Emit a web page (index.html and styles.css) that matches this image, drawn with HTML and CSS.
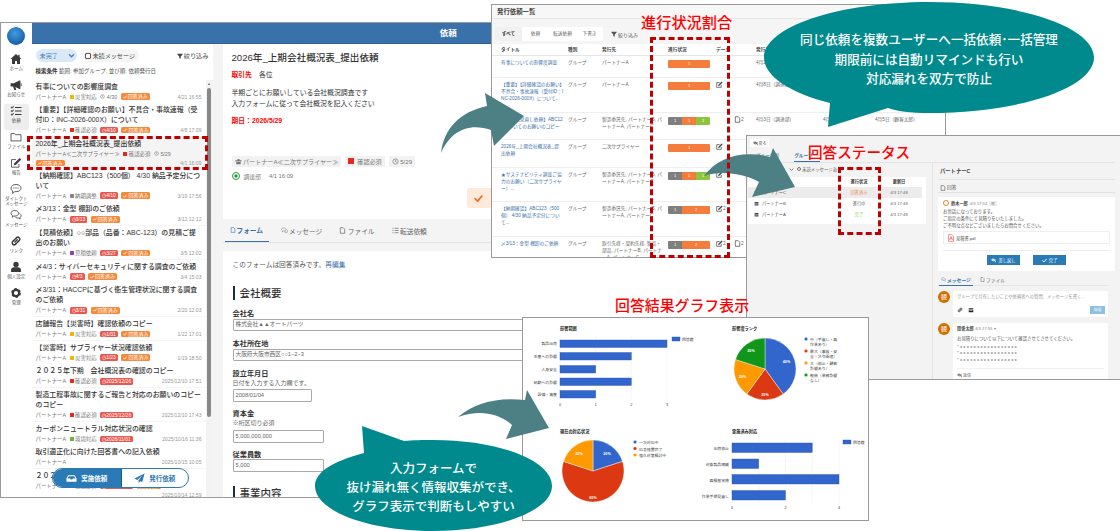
FILE: index.html
```html
<!DOCTYPE html>
<html lang="ja">
<head>
<meta charset="utf-8">
<title>依頼</title>
<link rel="stylesheet" href="styles.css">
</head>
<body>
<svg class="sprite" aria-hidden="true">
  <symbol id="i-home" viewBox="0 0 12 12"><path d="M6 1 .5 6H2v5h3V8h2v3h3V6h1.500L9.600 4.200V1.800H8.200v1.100z"/></symbol>
  <symbol id="i-mega" viewBox="0 0 12 12"><path d="M.6 4.200h3.200L9.400 1.400h1v8.600h-1L5.400 8l.9 3H4.200L3.200 7.600H.6z"/><path d="M10.800 4.200h.8v2.800h-.8z"/></symbol>
  <symbol id="i-list" viewBox="0 0 12 12"><path d="M5 2h6.500v1.100H5zM5 5.500h6.500v1.100H5zM5 9h6.500v1.100H5zM.6 2.200l.7-.6.7.8L3.400.9l.7.6-2.100 2.300zM.6 5.700l.7-.6.7.8 1.400-1.500.7.6-2.100 2.300zM.6 9.200l.7-.6.7.8 1.400-1.500.7.6-2.100 2.300z"/></symbol>
  <symbol id="i-folder" viewBox="0 0 12 12"><path class="ln" d="M1 2.500h3.400l1 1.200H11v6.200H1z"/></symbol>
  <symbol id="i-edit" viewBox="0 0 12 12"><path class="ln" d="M9 7v3.200H1.500V2.600h4.600"/><path d="M4.400 6.200 9.600 1l1.600 1.600L6 7.800l-2.200.6z"/></symbol>
  <symbol id="i-chat" viewBox="0 0 12 12"><path class="ln" d="M6 1.500c3 0 5 1.500 5 3.600s-2 3.600-5 3.600l-1.200-.1L2.600 10.400l.2-2.300C1.700 7.500 1 6.400 1 5.100 1 3 3 1.500 6 1.500z"/><path d="M3.400 4.500h1v1h-1zM5.500 4.500h1v1h-1zM7.600 4.500h1v1h-1z"/></symbol>
  <symbol id="i-chats" viewBox="0 0 12 12"><path class="ln" d="M4.800 1.500c2.200 0 3.900 1.200 3.900 2.800S7 7.100 4.800 7.100l-1-.1-1.500 1.200.1-1.800C1.500 5.900 1 5.100 1 4.300 1 2.700 2.600 1.500 4.800 1.500z"/><path class="ln" d="M9.500 4.400c1 .5 1.600 1.300 1.600 2.200 0 .8-.4 1.400-1.100 1.900l.1 1.500-1.400-1c-1.500.2-3-.3-3.700-1.300"/></symbol>
  <symbol id="i-link" viewBox="0 0 12 12"><path class="lnb" d="M5 7 7.200 4.800M4.700 4.500 2.600 6.600a2 2 0 0 0 2.800 2.800l1.100-1.100M7.300 7.500l2.100-2.100a2 2 0 0 0-2.800-2.800L5.500 3.700"/></symbol>
  <symbol id="i-user" viewBox="0 0 12 12"><circle cx="6" cy="3.500" r="2.700"/><path d="M1 11V9c0-1.700 1.500-2.800 3-2.800h4c1.500 0 3 1.100 3 2.800v2z"/></symbol>
  <symbol id="i-gear" viewBox="0 0 12 12"><circle class="gear" cx="6" cy="6" r="3.200"/><circle class="gear-d" cx="6" cy="6" r="3.900"/></symbol>
  <symbol id="i-funnel" viewBox="0 0 8 8"><path d="M.5 1h7v1L5 4.600V7.500L3 6.500V4.600L.5 2z"/></symbol>
  <symbol id="i-check" viewBox="0 0 8 8"><path class="lnb" d="M1 4.200 3.200 6.400 7 1.800"/></symbol>
  <symbol id="i-clock" viewBox="0 0 8 8"><circle class="ln" cx="4" cy="4" r="3"/><path class="ln" d="M4 2v2.200l1.400.8"/></symbol>
  <symbol id="i-doc" viewBox="0 0 8 8"><path class="ln" d="M1.500.8h3.300l1.700 1.700v4.700h-5z"/></symbol>
  <symbol id="i-pen" viewBox="0 0 8 8"><path class="ln" d="M6 4.500v2.700H.8V1.800h3.400"/><path d="M2.800 4.300 6.400.7l1.100 1.100L3.900 5.400l-1.400.3z"/></symbol>
  <symbol id="i-lines" viewBox="0 0 8 8"><path class="ln" d="M3 1.500h4.500M3 4h4.500M3 6.500h4.500M.5 1.500h1.200M.5 4h1.200M.5 6.500h1.200"/></symbol>
  <symbol id="i-inbox" viewBox="0 0 12 12"><path d="M2.500 2.500h7L11.500 6v3.500h-11V6zM3 3.500 1.800 6h2.700l.7 1h1.600l.7-1h2.700L9 3.500z"/></symbol>
  <symbol id="i-plane" viewBox="0 0 12 12"><path d="M11.500.5 .5 6l3 1.500L9 3 5 8v3l1.900-2.100 2.100 1z"/></symbol>
  <symbol id="i-group" viewBox="0 0 8 8"><circle cx="4" cy="2.600" r="1.500"/><path d="M1.400 7V5.700C1.400 4.800 2.200 4.400 3 4.400h2c.8 0 1.600.4 1.600 1.300V7z"/><circle cx="1.300" cy="3.300" r=".9"/><circle cx="6.700" cy="3.300" r=".9"/></symbol>
  <symbol id="i-store" viewBox="0 0 8 8"><path d="M1 1.500h6V3H1zM1 3.500h6V7H1z"/><path class="wh" d="M2 4.500h4v.8H2z"/></symbol>
  <symbol id="i-back" viewBox="0 0 8 8"><path class="lnb" d="M7 3 3 3M3 1 1 3 3 5M3 3c3 0 4 1.500 4 3"/></symbol>
</svg>

<main class="canvas">

  <section class="win win-main">
    <nav class="rail">
      <div class="logo"></div>
      <a class="rail-item"><svg class="rail-ic"><use href="#i-home"/></svg><span>ホーム</span></a>
      <a class="rail-item"><svg class="rail-ic"><use href="#i-mega"/></svg><span>お知らせ</span></a>
      <a class="rail-item is-on"><svg class="rail-ic"><use href="#i-list"/></svg><span>依頼</span></a>
      <a class="rail-item"><svg class="rail-ic"><use href="#i-folder"/></svg><span>ファイル</span></a>
      <a class="rail-item"><svg class="rail-ic"><use href="#i-edit"/></svg><span>報告</span></a>
      <a class="rail-item rail-two"><svg class="rail-ic"><use href="#i-chat"/></svg><span>ダイレクト<br>メッセージ</span></a>
      <a class="rail-item"><svg class="rail-ic"><use href="#i-chats"/></svg><span>メッセージ</span></a>
      <a class="rail-item"><svg class="rail-ic"><use href="#i-link"/></svg><span>リンク</span></a>
      <a class="rail-item"><svg class="rail-ic"><use href="#i-user"/></svg><span>個人設定</span></a>
      <a class="rail-item"><svg class="rail-ic"><use href="#i-gear"/></svg><span>管理</span></a>
    </nav>
    <div class="main-col">
      <header class="hdr">依頼</header>
      <div class="panes">
        <div class="list-pane">
          <div class="filter-row">
            <span class="pill-sel">未完了<svg class="chev" viewBox="0 0 8 8"><path class="lnb" d="M1.500 3 4 5.500 6.500 3"/></svg></span>
            <span class="pill-chk"><i class="cbx"></i>未読メッセージ</span>
            <span class="narrow"><svg class="ic6"><use href="#i-funnel"/></svg>絞り込み</span>
          </div>
          <p class="cond"><b>検索条件</b> 範囲: 参加グループ, 並び順: 依頼発行日</p>
          <div class="list-wrap">
            <ul class="items">
              <li class="item"><h3>有事についての影響度調査</h3><div class="meta"><span>パートナーA</span><span class="tag"><i class="mk m-y"></i>災害対応</span><span class="tag"><svg class="ic5"><use href="#i-clock"/></svg>4/30</span><span class="bd bd-a"><svg class="ic4"><use href="#i-check"/></svg>回答済み</span><time>4/21 16:55</time></div></li>
              <li class="item"><h3>【重要】【詳細確認のお願い】不具合・事故速報（受<br>付ID：INC-2026-000X）について</h3><div class="meta"><span>パートナーA</span><span class="tag"><i class="mk m-r"></i>確認必須</span><span class="bd bd-d">◷4/10</span><span class="bd bd-a"><svg class="ic4"><use href="#i-check"/></svg>回答済み</span><time>4/8 17:09</time></div></li>
              <li class="item is-sel"><h3>2026年_上期会社概況表_提出依頼</h3><div class="meta"><span>パートナーA≪二次サプライヤー≫</span><span class="tag"><i class="mk m-r"></i>確認必須</span><span class="tag"><svg class="ic5"><use href="#i-clock"/></svg>5/29</span></div><div class="meta meta-2"><span class="bd bd-a"><svg class="ic4"><use href="#i-check"/></svg>回答済み</span><time>4/1 16:09</time></div></li>
              <li class="item"><h3>【納期確認】ABC123（500個） 4/30 納品予定分につ<br>いて</h3><div class="meta"><span>パートナーA</span><span class="tag"><i class="mk m-n"></i>納期調整</span><span class="bd bd-d">◷4/10</span><span class="bd bd-a"><svg class="ic4"><use href="#i-check"/></svg>回答済み</span><time>3/19 17:56</time></div></li>
              <li class="item"><h3>〆3/13：金型 棚卸のご依頼</h3><div class="meta"><span>パートナーA</span><span class="bd bd-d">◷3/13</span><span class="bd bd-a"><svg class="ic4"><use href="#i-check"/></svg>回答済み</span><time>3/12 12:12</time></div></li>
              <li class="item"><h3>【見積依頼】○○部品（品番：ABC-123）の見積ご提<br>出のお願い</h3><div class="meta"><span>パートナーA</span><span class="tag"><i class="mk m-p"></i>見積依頼</span><span class="bd bd-d">◷3/27</span><span class="bd bd-a"><svg class="ic4"><use href="#i-check"/></svg>回答済み</span><time>3/5 12:02</time></div></li>
              <li class="item"><h3>〆4/3：サイバーセキュリティに関する調査のご依頼</h3><div class="meta"><span>パートナーA</span><span class="bd bd-d">◷4/3</span><span class="bd bd-a"><svg class="ic4"><use href="#i-check"/></svg>回答済み</span><time>3/4 15:03</time></div></li>
              <li class="item"><h3>〆3/31：HACCPに基づく衛生管理状況に関する調査<br>のご依頼</h3><div class="meta"><span>パートナーA</span><span class="bd bd-d">◷3/31</span><span class="bd bd-a"><svg class="ic4"><use href="#i-check"/></svg>回答済み</span><time>2/20 12:03</time></div></li>
              <li class="item"><h3>店舗報告【災害時】確認依頼のコピー</h3><div class="meta"><span>パートナーA</span><span class="tag"><i class="mk m-y"></i>災害対応</span><span class="bd bd-d">◷1/31</span><span class="bd bd-a"><svg class="ic4"><use href="#i-check"/></svg>回答済み</span><time>1/22 17:01</time></div></li>
              <li class="item"><h3>【災害時】サプライヤー状況確認依頼</h3><div class="meta"><span>パートナーA</span><span class="tag"><i class="mk m-y"></i>災害対応</span><span class="bd bd-d">◷1/23</span><span class="bd bd-a"><svg class="ic4"><use href="#i-check"/></svg>回答済み</span><time>1/19 18:50</time></div></li>
              <li class="item"><h3>２０２５年下期　会社概況表の確認のコピー</h3><div class="meta"><span>パートナーA</span><span class="tag"><i class="mk m-r"></i>確認必須</span><span class="bd bd-d">◷2025/12/26</span><time>2025/12/10 17:51</time></div></li>
              <li class="item"><h3>製造工程事故に関するご報告と対応のお願いのコピー<br>のコピー</h3><div class="meta"><span>パートナーA</span><span class="tag"><i class="mk m-r"></i>確認必須</span><span class="bd bd-d">◷2025/12/26</span><time>2025/12/10 17:43</time></div></li>
              <li class="item"><h3>カーボンニュートラル対応状況の確認</h3><div class="meta"><span>パートナーA</span><span class="tag"><i class="mk m-g"></i>環境対応</span><span class="bd bd-d">◷2026/11/01</span><time>2025/10/16 11:36</time></div></li>
              <li class="item"><h3>取引適正化に向けた回答書への記入依頼</h3><div class="meta"><span>パートナーA</span><time>2025/10/15 10:05</time></div></li>
              <li class="item"><h3>２０２５年上期　会社概況表の確認</h3><div class="meta"><span>パートナーA</span><span class="tag"><i class="mk m-r"></i>確認必須</span><span class="bd bd-d">◷2025/10/31</span><span class="bd bd-a">回答済み</span></div><div class="meta meta-2"><time>2025/10/14 12:59</time></div></li>
            </ul>
            <div class="scrollbar"><i class="sb-up"></i><i class="sb-thumb"></i></div>
          </div>
        </div>
        <div class="detail">
          <article class="card-top">
            <h1>2026年_上期会社概況表_提出依頼</h1>
            <p class="to"><b>取引先</b><span>各位</span></p>
            <p class="body-text">半期ごとにお願いしている会社概況調査です<br>入力フォームに従って会社概況を記入ください</p>
            <p class="due">期日：2026/5/29</p>
            <div class="chips">
              <span class="chip"><svg class="ic7c"><use href="#i-group"/></svg>パートナーA≪二次サプライヤー≫</span>
              <span class="chip"><i class="mk-l m-r"></i>確認必須</span>
              <span class="chip"><svg class="ic7c"><use href="#i-clock"/></svg>5/29</span>
            </div>
            <div class="author"><i class="ring"></i><span>調達部</span><time>4/1 16:09</time></div>
            <div class="done-box"><svg class="ic9"><use href="#i-check"/></svg></div>
          </article>
          <div class="tabs">
            <span class="tab is-on"><svg class="ic6"><use href="#i-doc"/></svg>フォーム</span>
            <span class="tab"><svg class="ic7c"><use href="#i-chats"/></svg>メッセージ</span>
            <span class="tab"><svg class="ic7c"><use href="#i-doc"/></svg>ファイル</span>
            <span class="tab"><svg class="ic7c"><use href="#i-lines"/></svg>転送依頼</span>
          </div>
          <form class="card-form">
            <p class="form-note">このフォームは回答済みです。<a>再編集</a></p>
            <h2 class="sec">会社概要</h2>
            <label class="fl fl-first">会社名</label>
            <div class="inp inp-full">株式会社▲▲オートパーツ</div>
            <label class="fl">本社所在地</label>
            <div class="inp inp-full">大阪府大阪市西区○○1−2−3</div>
            <label class="fl">設立年月日</label>
            <p class="hint">日付を入力する入力欄です。</p>
            <div class="inp inp-date">2008/01/04</div>
            <label class="fl fl-a">資本金</label>
            <p class="hint">※桁区切り必須</p>
            <div class="inp inp-num inp-gap">5,000,000,000</div>
            <label class="fl fl-b">従業員数</label>
            <div class="inp inp-num inp-flush">5,000</div>
            <h2 class="sec sec-2">事業内容</h2>
          </form>
        </div>
      </div>
    </div>
  </section>
  <div class="switch"><span class="sw sw-on"><svg class="ic9w"><use href="#i-inbox"/></svg>実施依頼</span><span class="sw"><svg class="ic9w"><use href="#i-plane"/></svg>発行依頼</span></div>

  <section class="win win-issued">
    <header class="iss-head">発行依頼一覧</header>
    <div class="iss-bar">
      <div class="seg"><span class="seg-on">すべて</span><span>依頼</span><span>転送依頼</span><span>下書き</span></div>
      <span class="iss-filter"><svg class="ic6"><use href="#i-funnel"/></svg>絞り込み</span>
    </div>
    <table class="iss">
      <colgroup><col class="c1"><col class="c2"><col class="c3"><col class="c4"><col class="c5"><col class="c6"><col class="c7"><col class="c8"><col class="c9"></colgroup>
      <thead><tr><th>タイトル</th><th>種別</th><th>発行先</th><th>進行状況</th><th>データ</th><th></th><th>発行日</th><th></th><th></th></tr></thead>
      <tbody>
        <tr><td class="lk">有事についての影響度調査</td><td>グループ</td><td>パートナーA</td><td class="pc"><div class="prog"><i class="p-o p-1">1</i></div></td><td></td><td></td><td>4月21日</td><td></td><td></td></tr>
        <tr><td class="lk">【重要】【詳細確認のお願い】<br>不具合・事故速報（受付ID：I<br>NC-2026-000X）について...</td><td>グループ</td><td>パートナーA</td><td class="pc"><div class="prog"><i class="p-o p-1">1</i></div></td><td><svg class="ic7"><use href="#i-pen"/></svg></td><td></td><td>4月8日（調達部）</td><td></td><td></td></tr>
        <tr><td class="lk">【取引先見直し依頼】ABC12<br>3についてのお願いのコピー</td><td>グループ</td><td>製造委託先, パートナーB, パ<br>ートナーA, パートナーC</td><td class="pc"><div class="prog"><i class="p-g p-1">1</i><i class="p-o p-1">1</i><i class="p-n p-1">1</i></div></td><td></td><td><svg class="ic7"><use href="#i-doc"/></svg>2</td><td>4月3日（調達部）</td><td>4月5日</td><td>4月5日（顧客太郎）</td></tr>
        <tr><td class="lk">2026年_上期会社概況表_提<br>出依頼</td><td>グループ</td><td>二次サプライヤー</td><td class="pc"><div class="prog"><i class="p-o p-1">1</i></div></td><td><svg class="ic7"><use href="#i-pen"/></svg></td><td></td><td></td><td></td><td></td></tr>
        <tr><td class="lk">★サステナビリティ調査ご協<br>力のお願い（二次サプライヤ<br>ー）...</td><td>グループ</td><td>製造委託先, パートナーB, パ<br>ートナーA, パートナーC</td><td class="pc"><div class="prog"><i class="p-g p-1">1</i><i class="p-o p-1">1</i><i class="p-n p-1">1</i></div></td><td><svg class="ic7"><use href="#i-pen"/></svg></td><td></td><td></td><td></td><td></td></tr>
        <tr><td class="lk">【納期確認】ABC123（500<br>個） 4/30 納品予定分につい<br>て...</td><td>グループ</td><td>製造委託先, パートナーB, パ<br>ートナーA, パートナーC</td><td class="pc"><div class="prog"><i class="p-g p-1">1</i><i class="p-o p-2">2</i></div></td><td><svg class="ic7"><use href="#i-pen"/></svg>2</td><td></td><td></td><td></td><td></td></tr>
        <tr><td class="lk">〆3/13：金型 棚卸のご依頼</td><td>グループ</td><td>取引先様・契約先様, 製品・<br>部品, パートナーB, パートナ<br>ーA, パートナーC</td><td class="pc"><div class="prog"><i class="p-g p-1">1</i><i class="p-o p-2">2</i></div></td><td><svg class="ic7"><use href="#i-pen"/></svg>2</td><td><svg class="ic7"><use href="#i-doc"/></svg>2</td><td></td><td></td><td></td></tr>
      </tbody>
    </table>
  </section>

  <section class="win win-status">
    <div class="back"><svg class="ic5"><use href="#i-back"/></svg>戻る</div>
    <div class="st-tabs"><span>グループ別</span><span class="is-on">グループ</span></div>
    <div class="st-body">
      <div class="st-left">
        <div class="st-filter"><svg class="chev2" viewBox="0 0 8 8"><path class="lnb" d="M1.500 3 4 5.500 6.500 3"/></svg><i class="radio"></i>未読メッセージあり</div>
        <div class="st-table">
          <div class="st-row st-hd"><span></span><b>進行状況</b><b>更新日</b></div>
          <div class="st-row is-sel"><span class="st-name"><svg class="ic6"><use href="#i-store"/></svg>パートナーC</span><span class="s-o">回答済み</span><span>4/3 17:48</span></div>
          <div class="st-row"><span class="st-name"><svg class="ic6"><use href="#i-store"/></svg>パートナーB</span><span>進行中</span><span>4/3 17:48</span></div>
          <div class="st-row"><span class="st-name"><svg class="ic6"><use href="#i-store"/></svg>パートナーA</span><span class="s-g">完了</span><span>4/3 17:48</span></div>
        </div>
      </div>
      <div class="st-right">
        <h4 class="st-title">パートナーC</h4>
        <p class="st-ans"><svg class="ic6"><use href="#i-doc"/></svg>回答</p>
        <div class="ans-card">
          <p class="ans-by"><i class="ring-o"></i><b>鈴木一郎</b><span>4/3 17:54</span><em>既</em></p>
          <p class="ans-text">お世話になっております。<br>ご指定の条件にて見積りをいたしました。<br>ご不明な点などございましたらお問合せください。</p>
          <div class="ans-file"><svg class="pdf" viewBox="0 0 8 10"><path d="M.7.5h4.500L7.300 2.600V9.500H.7z"/><path d="M2 7.500 4 3l2 4.500M2.500 6h3"/></svg>見積書.pdf</div>
          <div class="ans-btns"><span class="btn"><svg class="ic5"><use href="#i-back"/></svg>差し戻し</span><span class="btn"><svg class="ic5"><use href="#i-check"/></svg>完了</span></div>
        </div>
        <div class="msg-tabs"><span class="is-on"><svg class="ic5"><use href="#i-chats"/></svg>メッセージ</span><span><svg class="ic5"><use href="#i-doc"/></svg>ファイル</span></div>
        <div class="msg"><i class="ava">観</i>
          <div class="msg-card msg-input">
            <p class="ph">グループで共有したいことや依頼者への質問、メッセージを書く...</p>
            <div class="msg-tools"><svg class="ic7"><use href="#i-link"/></svg><svg class="ic7"><use href="#i-store"/></svg><span class="send">送信</span></div>
          </div>
        </div>
        <div class="msg msg-2"><i class="ava">観</i>
          <div class="msg-card msg-read">
            <p class="m-by"><b>関係太郎</b> 4/3 17:55 ▾</p>
            <p class="m-text">お見積りについて以下について確認させてさせてください。</p>
            <p class="m-list">* x x x x x x x x x x x x x x x x x<br>* x x x x x x x x x x x x x x x x x<br>* x x x x x x x x x x x x x x x x x</p>
            <p class="m-reply"><svg class="ic5"><use href="#i-back"/></svg>返信</p>
          </div>
        </div>
      </div>
    </div>
  </section>

  <section class="win win-chart">
    <svg class="chart-svg" viewBox="522 317 346 203">
      <g class="grid">
        <path d="M559 335V400M594.700 335V400M630.300 335V400M666 335V400"/>
        <path d="M731 438V502M757.800 438V502M784.500 438V502M811.300 438V502M838 438V502"/>
      </g>
      <text class="ct" x="559" y="329">影響範囲</text>
      <g class="bars">
        <rect x="559" y="339" width="107" height="7.500"/>
        <rect x="559" y="351.500" width="71.300" height="7.500"/>
        <rect x="559" y="364.500" width="35.700" height="7.500"/>
        <rect x="559" y="377" width="71.300" height="7.500"/>
        <rect x="559" y="389.500" width="35.700" height="7.500"/>
        <rect x="671" y="336" width="8" height="4"/>
      </g>
      <g class="lb-r">
        <text x="556" y="344">製品出荷</text>
        <text x="556" y="357">生産への影響</text>
        <text x="556" y="370">人身安全</text>
        <text x="556" y="382.500">納期への影響</text>
        <text x="556" y="395">設備・資産</text>
      </g>
      <g class="lb-c">
        <text x="559" y="405">0</text><text x="594.700" y="405">1</text><text x="630.300" y="405">2</text><text x="666" y="405">3</text>
      </g>
      <text class="lb" x="681" y="340">回答数</text>

      <text class="ct" x="731" y="329">影響度ランク</text>
      <path class="s-bl" d="M764 368V337A31 31 0 0 1 782.200 393.100Z"/>
      <path class="s-rd" d="M764 368 782.200 393.100A31 31 0 0 1 745.800 393.100Z"/>
      <path class="s-or" d="M764 368 745.800 393.100A31 31 0 0 1 734.500 358.400Z"/>
      <path class="s-gr" d="M764 368 734.500 358.400A31 31 0 0 1 764 337Z"/>
      <g class="pie-t">
        <text x="785.500" y="362">40%</text><text x="764" y="395">20%</text><text x="741.500" y="377">20%</text><text x="750" y="351">20%</text>
      </g>
      <circle class="s-bl" cx="805" cy="338" r="1.800"/><circle class="s-rd" cx="805" cy="350" r="1.800"/><circle class="s-or" cx="805" cy="362" r="1.800"/><circle class="s-gr" cx="805" cy="374" r="1.800"/>
      <g class="lb">
        <text x="809" y="340">中（手直し・再</text><text x="809" y="345">作業あり）</text>
        <text x="809" y="352">最大（事故・安</text><text x="809" y="357">全・法令関連）</text>
        <text x="809" y="364">大（停止・顧客</text><text x="809" y="369">影響あり）</text>
        <text x="809" y="376">軽微（業務影響</text><text x="809" y="381">なし）</text>
      </g>

      <text class="ct" x="559" y="432">現在の対応状況</text>
      <path class="s-bl" d="M592 470V439A31 31 0 0 1 621.500 460.400Z"/>
      <path class="s-rd" d="M592 470 621.500 460.400A31 31 0 1 1 562.500 460.400Z"/>
      <path class="s-or" d="M592 470 562.500 460.400A31 31 0 0 1 592 439Z"/>
      <g class="pie-t">
        <text x="606" y="454">20%</text><text x="592" y="498">60%</text><text x="578" y="454">20%</text>
      </g>
      <circle class="s-bl" cx="634" cy="441" r="1.800"/><circle class="s-rd" cx="634" cy="447.500" r="1.800"/><circle class="s-or" cx="634" cy="454" r="1.800"/>
      <g class="lb">
        <text x="638" y="443">一次対応中</text><text x="638" y="449.500">応急措置完了</text><text x="638" y="456">恒久対策検討中</text>
      </g>

      <text class="ct" x="731" y="432">実施済み対応</text>
      <g class="bars">
        <rect x="731" y="442" width="80.200" height="9.500"/>
        <rect x="731" y="458" width="26.700" height="9.500"/>
        <rect x="731" y="473.500" width="107" height="9.500"/>
        <rect x="731" y="489.500" width="53.500" height="9.500"/>
        <rect x="842" y="439" width="8" height="4"/>
      </g>
      <g class="lb-r">
        <text x="728" y="449">出荷停止</text>
        <text x="728" y="465">対象製品隔離</text>
        <text x="728" y="480.500">再検査実施</text>
        <text x="728" y="496.500">作業手順見直し</text>
      </g>
      <g class="lb-c">
        <text x="731" y="508">0</text><text x="784.500" y="508">2</text><text x="838" y="508">4</text>
      </g>
      <text class="lb" x="852" y="443">回答数</text>
    </svg>
  </section>

  <svg class="overlay" viewBox="0 0 1120 531" aria-hidden="true">
    <path class="arrow" d="M441 153C444 128 460 112 487 106L485 93 524 116 494 146 491 130C468 122 450 132 441 153Z"/>
    <path class="arrow" d="M704 176C718 156 745 150 770 157L773 148 795 187 752 197 759 182C745 174 722 170 704 176Z"/>
    <path class="arrow" d="M458 417C475 402 500 397 525 400L527 390 549 428 506 439 512 425C497 412 478 410 458 417Z"/>
    <path class="bubble" d="M830 103 828 127 888 108C895 111 912 113 929 113 1020 113 1094 88 1094 57.500 1094 27 1020 2 929 2 838 2 764 27 764 57.500 764 76 790 93 830 103Z"/>
    <path class="bubble" d="M362 426 404 441C412 440 424 440 433 440 498 440 552 460 552 486 552 511 498 531 433 531 368 531 315 511 315 486 315 473 330 462 364 453Z"/>
  </svg>

  <div class="mark mark-sel"></div>
  <div class="mark mark-prog"></div>
  <div class="mark mark-status"></div>

  <p class="red red-1">進行状況割合</p>
  <p class="red red-2">回答ステータス</p>
  <p class="red red-3">回答結果グラフ表示</p>

  <p class="talk talk-1">同じ依頼を複数ユーザーへ一括依頼･一括管理<br>期限前には自動リマインドも行い<br>対応漏れを双方で防止</p>
  <p class="talk talk-2">入力フォームで<br>抜け漏れ無く情報収集ができ、<br>グラフ表示で判断もしやすい</p>
</main>
</body>
</html>
```

FILE: styles.css
```css
* { box-sizing: border-box; }
html, body { margin: 0; padding: 0; }
body { background: #fff; font-family: "Liberation Sans", "Noto Sans CJK JP", sans-serif; color: #333; }
h1, h2, h3, h4, p, ul { margin: 0; padding: 0; font-weight: normal; }
ul { list-style: none; }
i, em { font-style: normal; }
svg { display: block; fill: currentColor; flex: none; }
.sprite { position: absolute; width: 0; height: 0; }
.ln { fill: none; stroke: currentColor; stroke-width: .8; }
.lnb { fill: none; stroke: currentColor; stroke-width: 1.5; stroke-linecap: round; stroke-linejoin: round; }
.wh { fill: #fff; }
.gear { fill: none; stroke: currentColor; stroke-width: 2.2; }
.gear-d { fill: none; stroke: currentColor; stroke-width: 2; stroke-dasharray: 2.2 1.9; }

.canvas { position: relative; width: 1120px; height: 531px; overflow: hidden; background: #fff; }
.win { position: absolute; background: #fff; border: 1px solid #9a9a9a; overflow: hidden; }

/* main window */
.win-main { left: 0; top: 22px; width: 866px; height: 476px; display: flex; border-width: 1.5px; }
.rail { width: 30.5px; flex: none; display: flex; flex-direction: column; align-items: center; background: #fff; }
.logo { width: 18px; height: 18px; margin: 3.5px 0 7px; border-radius: 50%; background: radial-gradient(circle at 45% 35%, #3f9be0, #1a5fa5 75%, #134a85); flex: none; }
.rail-item { width: 25px; height: 26px; padding-top: 1px; display: flex; flex-direction: column; align-items: center; color: #555; font-size: 4.5px; line-height: 6px; text-align: center; border-radius: 2px; flex: none; white-space: nowrap; }
.rail-ic { width: 12px; height: 12px; margin-bottom: 1px; color: #3a3a3a; }
.rail-item.is-on { background: #eee; }
.rail-two { line-height: 5px; }
.main-col { flex: 1; min-width: 0; display: flex; flex-direction: column; }
.hdr { height: 21px; flex: none; background: #3b71ab; border-bottom: 1px solid #2d5f96; color: #fff; font-size: 8.5px; font-weight: bold; line-height: 20px; text-align: center; }
.panes { flex: 1; min-height: 0; display: flex; }

.list-pane { width: 181px; flex: none; display: flex; flex-direction: column; background: #fff; overflow: hidden; }
.filter-row { display: flex; align-items: center; height: 13px; margin-top: 5px; padding: 0 4px; flex: none; }
.pill-sel { width: 41px; height: 13px; border-radius: 7px; background: #d9e9f7; color: #3f7cb8; font-size: 6.200px; line-height: 13px; padding: 0 2px 0 4px; display: flex; align-items: center; justify-content: space-between; }
.chev { width: 7px; height: 7px; }
.pill-chk { margin-left: 5px; width: 57px; height: 13px; border-radius: 7px; background: #f5f5f5; font-size: 6.100px; display: flex; align-items: center; padding-left: 3px; color: #444; white-space: nowrap; }
.cbx { width: 6px; height: 6px; border: .7px solid #555; border-radius: 1px; margin-right: 2px; background: #fff; }
.narrow { margin-left: auto; display: flex; align-items: center; font-size: 6.200px; color: #444; white-space: nowrap; }
.cond { margin: 6px 0 0 4px; font-size: 5.500px; line-height: 6px; color: #555; white-space: nowrap; }
.cond b { color: #333; }
.list-wrap { display: flex; margin-top: 5.500px; flex: 1; min-height: 0; background: #f6f6f6; }
.items { width: 174px; flex: none; }
.scrollbar { flex: 1; position: relative; background: #f3f3f3; display: flex; flex-direction: column; align-items: center; }
.sb-up { width: 0; height: 0; border: 1.500px solid transparent; border-bottom: 2px solid #555; border-top: 0; margin-top: 3px; }
.sb-thumb { width: 4px; height: 329px; margin-top: 3px; background: #888; border-radius: 2px; }
.item { background: #fff; padding: 2px 4px 1px; margin-bottom: .7px; }
.item h3 { font-size: 6.900px; line-height: 10px; font-weight: 500; color: #333; white-space: nowrap; }
.item.is-sel { background: #f4f4f4; }
.meta { display: flex; align-items: center; gap: 3.500px; height: 10px; font-size: 5.400px; color: #777; white-space: nowrap; }
.meta time { margin-left: auto; font-size: 5.100px; color: #999; }
.meta-2 { height: 8px; }
.tag { display: inline-flex; align-items: center; gap: 1.500px; }
.mk { width: 4px; height: 4px; display: block; }
.mk-l { width: 6px; height: 6px; display: block; margin-right: 3px; }
.m-y { background: #f2b705; }
.m-r { background: #e6281e; }
.m-p { background: #8e44ad; }
.m-g { background: #6fb03e; }
.m-n { background: #888; }
.ic4 { width: 4px; height: 4px; margin-right: 1px; }
.ic5 { width: 5px; height: 5px; }
.ic6 { width: 6px; height: 6px; margin-right: 1px; }
.ic7c { width: 7px; height: 7px; margin-right: 1.500px; }
.ic7 { width: 7px; height: 7px; display: inline-block; color: #444; }
.ic9 { width: 9px; height: 9px; color: #ea6a1e; }
.ic9w { width: 11px; height: 11px; margin-right: 4px; }
.bd { display: inline-flex; align-items: center; height: 6.500px; padding: 0 2px; border-radius: 1.500px; color: #fff; font-size: 5px; line-height: 6.500px; }
.bd-a { background: #f58a3c; }
.bd-d { background: #e8584f; }

.switch { position: absolute; left: 52px; top: 468px; width: 137px; height: 20px; display: flex; border: 1px solid #2a7ab5; border-radius: 10px; overflow: hidden; background: #fff; font-size: 6.500px; }
.sw { flex: 1; display: flex; align-items: center; justify-content: center; color: #2a7ab5; font-weight: bold; }
.sw-on { background: #2a7ab5; color: #fff; flex: 1.020; border-right: 1px solid #1e5c8c; }

/* detail */
.detail { flex: 1; min-width: 0; padding-left: 10px; background: #f4f4f4; display: flex; flex-direction: column; overflow: hidden; }
.card-top { height: 175px; flex: none; background: #fff; padding: 8px 9px; }
.card-top h1 { font-size: 9.600px; line-height: 12px; font-weight: 500; color: #333; white-space: nowrap; }
.to { margin-top: 7px; font-size: 6.800px; line-height: 8px; display: flex; gap: 7px; }
.to b { color: #f00; }
.body-text { margin-top: 7.500px; font-size: 6.850px; line-height: 11px; white-space: nowrap; }
.due { margin-top: 8.500px; font-size: 6.800px; line-height: 8px; color: #f00; font-weight: bold; }
.chips { margin-top: 30.500px; display: flex; gap: 4px; }
.chip { height: 11px; display: inline-flex; align-items: center; padding: 0 3px; background: #f2f2f2; font-size: 6.100px; color: #777; border-radius: 1px; white-space: nowrap; }
.author { margin-top: 4.500px; height: 10px; display: flex; align-items: center; font-size: 5.800px; color: #777; }
.ring { width: 8px; height: 8px; margin-right: 4px; border: 1.500px solid #1f9d3a; border-radius: 50%; background: radial-gradient(circle, #1f9d3a 35%, #fff 40%); }
.author time { margin-left: 8px; }
.done-box { margin: 7px 0 0 235px; width: 60px; height: 20px; background: #fdeadb; border-radius: 2px; display: flex; align-items: center; padding-left: 7px; }
.tabs { height: 24px; flex: none; display: flex; align-items: flex-end; padding-left: 2px; gap: 5px; border-bottom: 1px solid #e4e4e4; margin-bottom: 8px; }
.tab { height: 23px; padding: 0 5px; display: flex; align-items: center; font-size: 6.700px; color: #666; white-space: nowrap; margin-right: 2px; }
.tab.is-on { color: #3b71ab; border-bottom: 1.500px solid #3b71ab; font-weight: bold; width: 44px; }
.card-form { flex: 1; background: #fff; padding: 10px 0 0 10px; overflow: hidden; }
.form-note { font-size: 6.700px; line-height: 8px; color: #555; white-space: nowrap; }
.form-note a { color: #3b71ab; }
.sec { margin-top: 17px; height: 14px; line-height: 14px; padding-left: 5px; border-left: 2.500px solid #1d2d44; font-size: 10.500px; font-weight: 500; color: #333; }
.sec-2 { margin-top: 14px; }
.fl { display: block; margin-top: 7.500px; font-size: 7.200px; line-height: 9px; font-weight: bold; color: #333; }
.fl-first { margin-top: 8.500px; }
.fl-a { margin-top: 6.500px; }
.fl-b { margin-top: 7px; }
.hint { margin-top: 1.500px; font-size: 6px; line-height: 8px; color: #666; }
.inp { margin-top: 1.500px; height: 12px; line-height: 9.500px; padding-left: 2px; border: 1.200px solid #aaa; border-radius: 1px; font-size: 5.700px; color: #666; white-space: nowrap; background: #fff; }
.inp-full { width: 620px; }
.inp-date { width: 79px; height: 13px; margin-top: 2px; line-height: 10.500px; }
.inp-num { width: 91px; height: 13px; line-height: 10.500px; }
.inp-gap { margin-top: 3px; }
.inp-flush { margin-top: 0; }

/* issued list */
.win-issued { left: 491px; top: 4px; width: 455px; height: 254px; background: #f5f5f5; }
.iss-head { height: 14px; padding-left: 5px; line-height: 13px; font-size: 6.400px; font-weight: bold; color: #444; background: #f7f7f7; border-bottom: 1px solid #e6e6e6; }
.iss-bar { height: 25px; padding: 8px 0 0 3px; display: flex; align-items: flex-start; background: #f5f5f5; }
.seg { display: flex; height: 14px; background: #fff; border-radius: 2px; font-size: 4.700px; line-height: 14px; color: #666; }
.seg span { width: 27px; text-align: center; }
.seg .seg-on { background: #f1f1f1; color: #333; font-weight: bold; }
.iss-filter { margin-left: 8px; height: 14px; display: flex; align-items: center; font-size: 5px; color: #555; white-space: nowrap; }
.iss { table-layout: fixed; width: 453px; border-collapse: collapse; background: #fff; font-size: 4.700px; line-height: 7px; color: #666; }
.c1 { width: 76px; } .c2 { width: 34px; } .c3 { width: 66px; } .c4 { width: 48px; } .c5 { width: 18px; } .c6 { width: 22px; } .c7 { width: 67px; } .c8 { width: 52px; } .c9 { width: 70px; }
.iss th { height: 11px; padding: 0; text-align: left; font-weight: bold; color: #444; line-height: 7px; border-bottom: 1px solid #e6e6e6; }
.iss th:first-child, .iss td:first-child { padding-left: 9px; }
.iss td { padding: 3px 0 9.500px; vertical-align: top; white-space: nowrap; overflow: visible; border-bottom: .5px solid #eee; }
.iss .lk { color: #3b71ab; }
.iss .pc { padding-top: 4px; }
.iss td svg { display: inline-block; vertical-align: top; }
.prog { width: 42px; height: 8px; display: flex; border-radius: 1px; overflow: hidden; color: #fff; font-size: 4px; line-height: 8px; text-align: center; }
.prog i { display: block; }
.p-1 { flex: 1; }
.p-2 { flex: 2; }
.p-o { background: #f47c3c; }
.p-g { background: #7f7f7f; }
.p-n { background: #8cc63f; }

/* status window */
.win-status { left: 746px; top: 135px; width: 375px; height: 245px; background: #f3f3f3; }
.back { margin: 3px 0 0 3px; width: 19px; height: 8px; display: flex; align-items: center; justify-content: center; background: #fff; font-size: 4px; color: #555; gap: 1px; white-space: nowrap; }
.st-tabs { margin-top: 3px; height: 13px; display: flex; gap: 12px; padding-left: 9px; border-bottom: 1px solid #e3e3e3; font-size: 4.700px; line-height: 11px; color: #666; width: 368px; white-space: nowrap; }
.st-tabs .is-on { color: #3b71ab; font-weight: bold; border-bottom: 1px solid #3b71ab; height: 12px; width: 26px; margin-left: 3px; }
.st-body { display: flex; }
.st-left { width: 185px; flex: none; padding-left: 1px; }
.st-filter { margin-top: 2px; height: 8px; display: flex; align-items: center; padding-left: 41px; font-size: 4.400px; color: #666; white-space: nowrap; }
.chev2 { width: 5px; height: 5px; color: #777; margin-right: 3px; }
.radio { width: 4px; height: 4px; border: .5px solid #777; border-radius: 50%; margin-right: 1px; }
.st-table { margin-top: 4px; width: 178px; height: 47px; background: #fff; }
.st-row { display: grid; grid-template-columns: 90px 42px 38px; height: 11px; width: 174px; font-size: 4.200px; line-height: 11px; text-align: center; color: #666; }
.st-hd { height: 10px; line-height: 10px; color: #333; }
.st-hd b { font-weight: bold; }
.st-row.is-sel { background: #ececec; }
.st-name { display: flex; align-items: center; padding-left: 6px; gap: 3px; color: #555; white-space: nowrap; }
.st-name .ic6 { width: 5px; height: 5px; margin: 0; color: #444; }
.s-o { color: #f0864a; }
.s-g { color: #8cc63f; }
.st-right { flex: 1; min-width: 0; border-left: 1px solid #e3e3e3; padding-left: 5px; }
.st-title { margin-top: 4px; height: 13px; line-height: 8px; font-size: 5.300px; font-weight: bold; color: #444; border-bottom: 1px solid #e3e3e3; width: 177px; padding-left: 2px; }
.st-ans { width: 177px; height: 13px; line-height: 8px; padding: 4px 0 0 2px; display: flex; align-items: center; font-size: 4.700px; color: #555; border-bottom: 1px solid #e3e3e3; }
.ans-card { margin-top: 4px; width: 177px; height: 74px; background: #fff; padding: 3px 5px; }
.ans-by { height: 6px; display: flex; align-items: center; gap: 2px; font-size: 4.200px; color: #888; white-space: nowrap; }
.ans-by b { color: #444; }
.ans-by em { background: #eee; padding: 0 2px; font-size: 3.500px; }
.ring-o { width: 6px; height: 6px; border: 1.500px solid #e8871e; border-radius: 50%; margin-right: 0; }
.ans-text { margin-top: 1.500px; font-size: 4.400px; line-height: 7px; color: #555; white-space: nowrap; }
.ans-file { margin-top: 2.500px; height: 13px; border: .5px solid #eee; display: flex; align-items: center; gap: 2px; padding-left: 4px; font-size: 4.200px; color: #555; }
.pdf { width: 6px; height: 8px; fill: #fff; stroke: #d33; stroke-width: .7; }
.ans-btns { margin-top: 6px; padding-top: 4px; border-top: .5px solid #eee; display: flex; justify-content: center; gap: 13px; }
.btn { width: 33px; height: 10px; background: #2a7ab5; color: #fff; font-size: 4.300px; display: flex; align-items: center; justify-content: center; gap: 2px; }
.msg-tabs { margin-top: 2px; width: 170px; height: 13px; display: flex; gap: 5px; padding-left: 1px; border-bottom: 1px solid #e6e6e6; font-size: 4.800px; color: #666; }
.msg-tabs span { display: flex; align-items: center; gap: 1px; height: 12px; padding: 0 2px; white-space: nowrap; }
.msg-tabs .is-on { color: #3b71ab; font-weight: bold; border-bottom: 1px solid #3b71ab; height: 13px; }
.msg { display: flex; margin-top: 5px; gap: 3px; width: 170px; }
.msg-2 { margin-top: 6px; }
.ava { width: 12px; height: 12px; flex: none; border-radius: 50%; background: #d36e00; color: #fff; font-size: 6px; line-height: 12px; text-align: center; }
.msg-card { flex: 1; min-width: 0; background: #fff; padding: 3px 4px; }
.msg-input { height: 26px; }
.ph { font-size: 4.300px; line-height: 6px; color: #999; white-space: nowrap; }
.msg-tools { margin-top: 5px; display: flex; align-items: center; gap: 5px; position: relative; height: 9px; }
.msg-tools .ic7 { width: 6px; height: 6px; color: #222; }
.send { margin-left: auto; width: 15px; height: 8px; background: #8fc0e0; color: #fff; font-size: 3.800px; line-height: 8px; text-align: center; margin-right: -1px; }
.msg-read { height: 56px; }
.m-by { font-size: 4.200px; line-height: 6px; color: #888; white-space: nowrap; }
.m-by b { color: #444; }
.m-text { margin-top: 4px; font-size: 4.400px; line-height: 6px; color: #555; white-space: nowrap; }
.m-list { margin-top: 1.500px; font-size: 4.400px; line-height: 6.600px; color: #555; white-space: nowrap; }
.m-reply { margin-top: 5px; border-top: .5px solid #f0f0f0; padding-top: 3px; display: flex; gap: 1px; align-items: center; font-size: 4px; color: #666; }

/* chart window */
.win-chart { left: 522px; top: 317px; width: 347px; height: 204px; }
.chart-svg { width: 346px; height: 203px; }
.grid path { fill: none; stroke: #ececec; stroke-width: .5; }
.bars rect { fill: #3366cc; stroke: #2a58b0; stroke-width: .4; }
.chart-svg text { font-family: "Liberation Sans", "Noto Sans CJK JP", sans-serif; font-size: 3.900px; fill: #444; }
.chart-svg .ct { font-size: 4.200px; font-weight: bold; fill: #222; }
.lb-r text { text-anchor: end; }
.lb-c text { text-anchor: middle; }
.pie-t text { text-anchor: middle; fill: #fff; font-size: 3.700px; font-weight: bold; }
.s-bl { fill: #3366cc; stroke: #fff; stroke-width: .4; }
.s-rd { fill: #dc3912; stroke: #fff; stroke-width: .4; }
.s-or { fill: #ff9900; stroke: #fff; stroke-width: .4; }
.s-gr { fill: #109618; stroke: #fff; stroke-width: .4; }

/* overlays */
.overlay { position: absolute; left: 0; top: 0; width: 1120px; height: 531px; pointer-events: none; }
.arrow { fill: #4d8085; }
.bubble { fill: #008a8d; }
.mark { position: absolute; border: 3px dashed #c00000; }
.mark-sel { left: 27px; top: 136px; width: 181px; height: 34px; }
.mark-prog { left: 650px; top: 37px; width: 80px; height: 221px; }
.mark-status { left: 838px; top: 167px; width: 43px; height: 68px; }
.red { position: absolute; color: #f00; white-space: nowrap; font-family: "Noto Sans CJK JP", sans-serif; font-weight: 500; line-height: 20px; }
.red-1 { left: 641px; top: 11px; font-size: 15.200px; }
.red-2 { left: 808px; top: 142px; font-size: 14.600px; }
.red-3 { left: 615px; top: 295px; font-size: 14.900px; }
.talk { position: absolute; color: #fff; text-align: center; white-space: nowrap; font-family: "Noto Sans CJK JP", sans-serif; font-weight: 500; }
.talk-1 { left: 764px; top: 29px; width: 330px; font-size: 12.600px; line-height: 19.500px; }
.talk-2 { left: 315px; top: 458px; width: 237px; font-size: 12.500px; line-height: 19px; }
```
